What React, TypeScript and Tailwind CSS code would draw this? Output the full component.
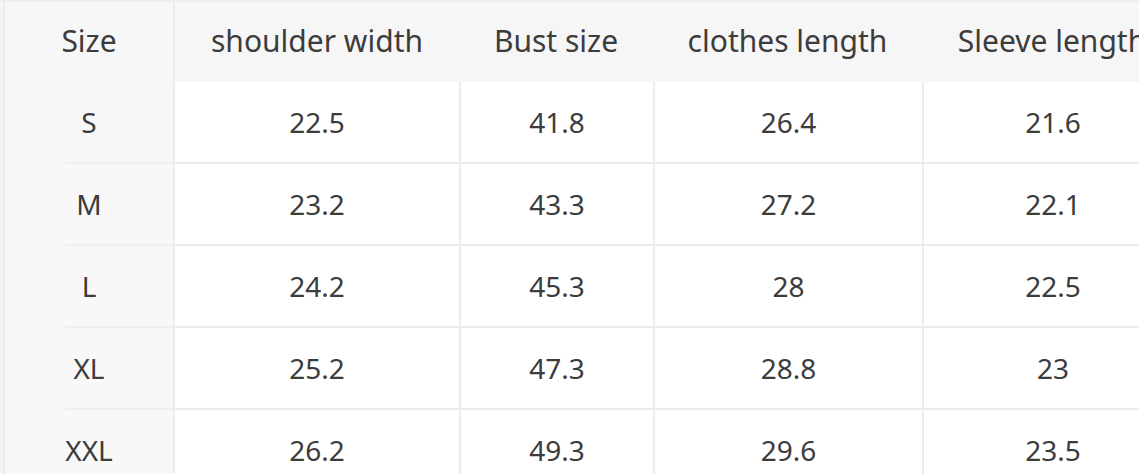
const headers = ["Size", "shoulder width", "Bust size", "clothes length", "Sleeve length"];

const rows = [
  ["S", "22.5", "41.8", "26.4", "21.6"],
  ["M", "23.2", "43.3", "27.2", "22.1"],
  ["L", "24.2", "45.3", "28", "22.5"],
  ["XL", "25.2", "47.3", "28.8", "23"],
  ["XXL", "26.2", "49.3", "29.6", "23.5"],
];

// column widths in px, last one runs past the window edge
const cols = "grid-cols-[172px_284px_194px_269px_260px]";

export default function App() {
  return (
    <div className="h-[474px] w-[1139px] overflow-hidden bg-white font-['Noto_Sans',sans-serif] text-[#3c3c3c]">
      <div className="w-[1182px] border-t-2 border-l-[3px] border-t-[#eeeeee] border-l-[#f4f4f4]">
        {/* header */}
        <div className={`grid ${cols} h-[80px] bg-[#f6f6f6]`}>
          {headers.map((h, i) => (
            <div
              key={h}
              className={`flex items-center justify-center text-[30px] ${
                i === 0 ? "border-x-2 border-[#ececec] bg-[#f7f7f7]" : ""
              }`}
            >
              <span className="whitespace-nowrap pb-1">{h}</span>
            </div>
          ))}
        </div>

        {/* body */}
        {rows.map((r) => (
          <div key={r[0]} className={`grid ${cols} h-[82px]`}>
            <div className="flex flex-col border-x-2 border-[#ececec] bg-[#f8f8f8]">
              <div className="flex flex-1 items-center justify-center text-[28px]">{r[0]}</div>
              <div className="ml-[60px] h-[2px] bg-[#efefef]" />
            </div>
            {r.slice(1).map((v, i) => (
              <div
                key={i}
                className={`flex items-center justify-center border-b-2 border-[#ececec] text-[28px] ${
                  i > 0 ? "border-l-2" : ""
                }`}
              >
                {v}
              </div>
            ))}
          </div>
        ))}
      </div>
    </div>
  );
}
